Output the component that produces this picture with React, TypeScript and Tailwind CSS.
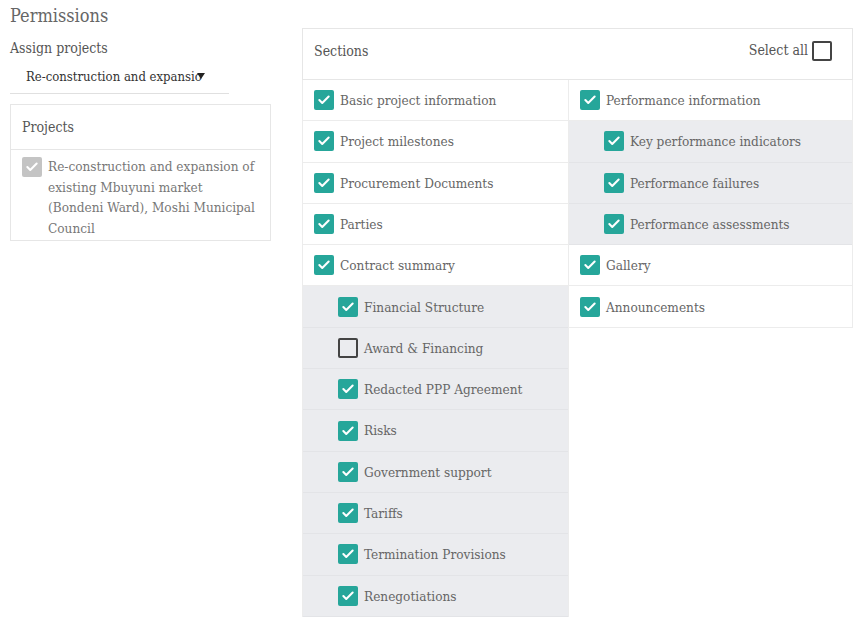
import { Check } from "lucide-react";

const slab = { fontFamily: '"DejaVu Serif Condensed", "DejaVu Serif", serif' };

type Item = { label: string; checked?: boolean; sub?: boolean };

const leftItems: Item[] = [
  { label: "Basic project information" },
  { label: "Project milestones" },
  { label: "Procurement Documents" },
  { label: "Parties" },
  { label: "Contract summary" },
  { label: "Financial Structure", sub: true },
  { label: "Award & Financing", sub: true, checked: false },
  { label: "Redacted PPP Agreement", sub: true },
  { label: "Risks", sub: true },
  { label: "Government support", sub: true },
  { label: "Tariffs", sub: true },
  { label: "Termination Provisions", sub: true },
  { label: "Renegotiations", sub: true },
];

const rightItems: Item[] = [
  { label: "Performance information" },
  { label: "Key performance indicators", sub: true },
  { label: "Performance failures", sub: true },
  { label: "Performance assessments", sub: true },
  { label: "Gallery" },
  { label: "Announcements" },
];

function Box({ checked = true, grey = false }: { checked?: boolean; grey?: boolean }) {
  if (!checked) {
    return <span className="w-5 h-5 shrink-0 rounded-[2px] border-2 border-[#444]" />;
  }
  return (
    <span
      className={`w-5 h-5 shrink-0 rounded-[2px] flex items-center justify-center ${
        grey ? "bg-[#c4c4c4]" : "bg-[#26a69a]"
      }`}
    >
      <Check className="w-[14px] h-[14px] text-white" strokeWidth={3.5} />
    </span>
  );
}

function Row({ item }: { item: Item }) {
  return (
    <div
      className={`h-[41.3px] flex items-center gap-[6px] border-b ${
        item.sub ? "bg-[#ebecef] border-[#e3e4e7] pl-[35px]" : "bg-white border-[#ececec] pl-[11px]"
      }`}
    >
      <Box checked={item.checked !== false} />
      <span className="text-[13.5px] text-[#666]">{item.label}</span>
    </div>
  );
}

export default function App() {
  return (
    <main className="w-[866px] h-[634px] bg-white relative overflow-hidden" style={slab}>
      <div className="flex">
        {/* left side */}
        <div className="w-[302px] shrink-0 pl-[10px]">
          <h1 className="text-[18px] text-[#666] leading-none mt-[7px]">Permissions</h1>
          <div className="mt-[16px] text-[14px] text-[#555] leading-none">Assign projects</div>
          <div className="w-[219px] mt-[12px] h-[27px] border-b border-[#e0e0e0] relative pl-[16px] text-[13px] text-[#333] leading-none pt-[3px]">
            Re-construction and expansio
            <svg className="absolute left-[187px] top-[6px]" width="8" height="6" viewBox="0 0 8 6">
              <path d="M0 0 L8 0 L4 6 Z" fill="#222" />
            </svg>
          </div>
          <div className="w-[261px] mt-[10px] border border-[#e6e6e6]">
            <div className="h-[45px] flex items-start pt-[12px] px-[11px] border-b border-[#e6e6e6] text-[14px] text-[#555]">
              Projects
            </div>
            <div className="flex gap-[6px] px-[11px] pt-[6px] pb-[1px]">
              <span className="mt-[1px]">
                <Box grey />
              </span>
              <p className="w-[210px] text-[13.5px] text-[#777] leading-[20.7px]">
                Re-construction and expansion of existing Mbuyuni market (Bondeni Ward), Moshi Municipal Council
              </p>
            </div>
          </div>
        </div>

        {/* sections */}
        <div className="w-[551px] mt-[28px]">
          <div className="h-[52px] border border-[#e6e6e6] flex items-start justify-between pt-[11px] pl-[11px] pr-[20px]">
            <span className="text-[14px] text-[#555] mt-[1px]">Sections</span>
            <span className="flex items-center gap-[4px] text-[14px] text-[#555]">
              Select all
              <Box checked={false} />
            </span>
          </div>
          <div className="flex items-start">
            <div className="w-[267px] border-l border-r border-[#ececec]">
              {leftItems.map((item) => (
                <Row key={item.label} item={item} />
              ))}
            </div>
            <div className="w-[284px] border-r border-[#ececec]">
              {rightItems.map((item) => (
                <Row key={item.label} item={item} />
              ))}
            </div>
          </div>
        </div>
      </div>
    </main>
  );
}
